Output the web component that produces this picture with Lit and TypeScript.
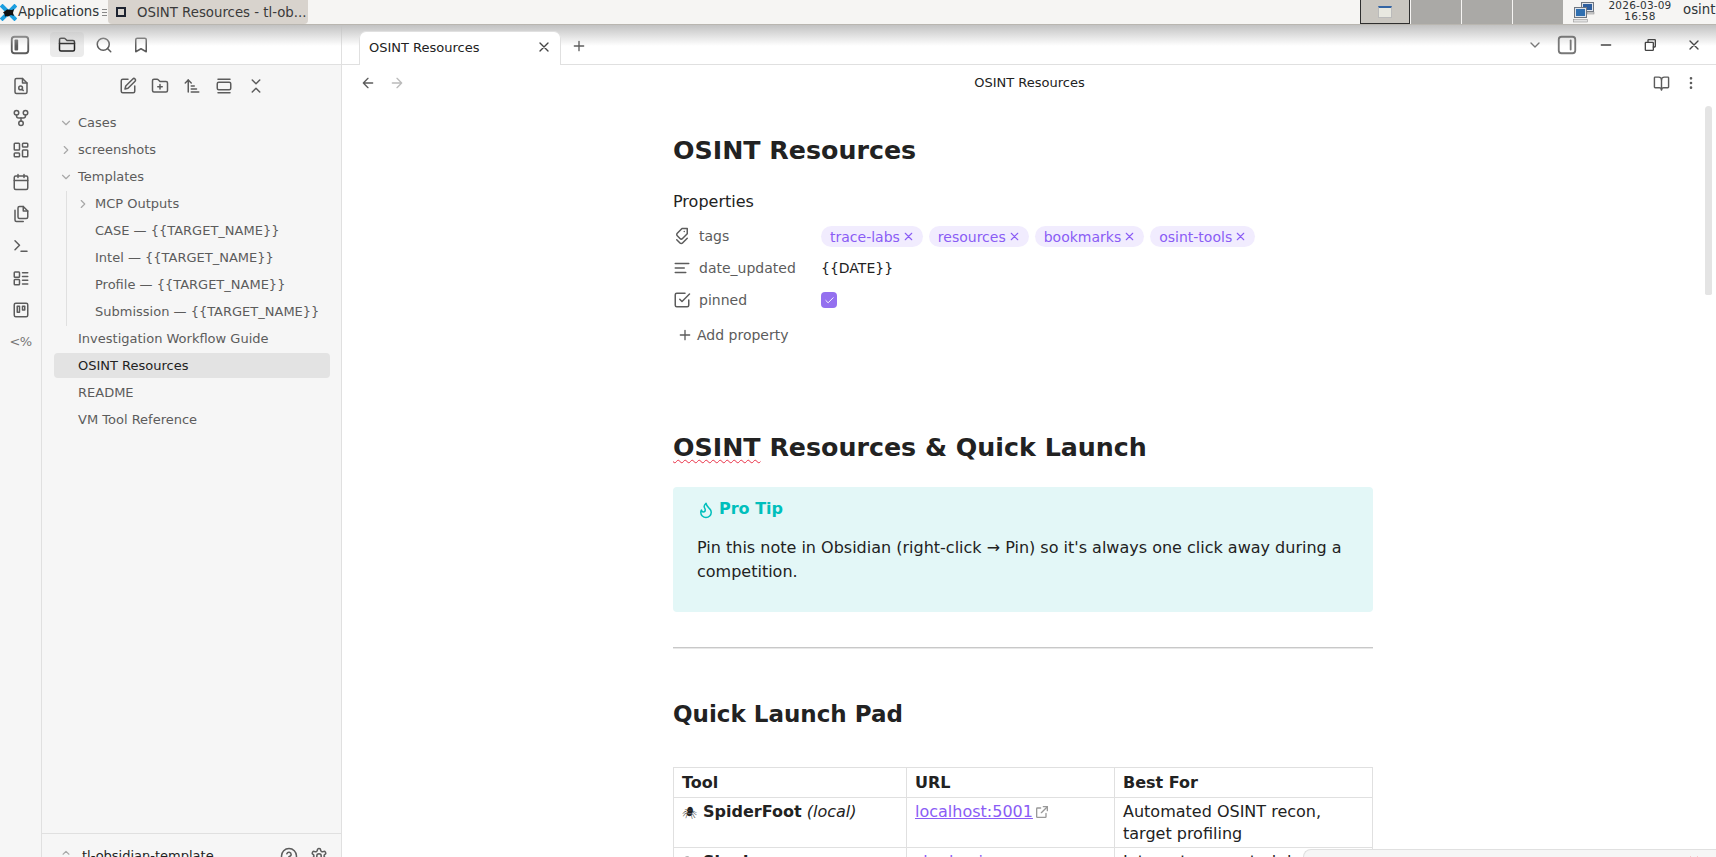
import { LitElement, html, css, svg } from "lit";
import { customElement } from "lit/decorators.js";

const ic = (body: unknown, size = 18, cls = "") => html`<svg class="ic ${cls}" width=${size} height=${size} viewBox="0 0 24 24" fill="none" stroke="currentColor" stroke-width="2" stroke-linecap="round" stroke-linejoin="round">${body}</svg>`;

const icons = {
  sidebarL: svg`<rect x="3" y="3" width="18" height="18" rx="3"/><rect x="6" y="6" width="4" height="12" rx="1" fill="currentColor" stroke="none"/>`,
  sidebarR: svg`<rect x="3" y="3" width="18" height="18" rx="3"/><path d="M16 7v10"/>`,
  folder: svg`<path d="M4 20h16a2 2 0 0 0 2-2V8a2 2 0 0 0-2-2h-8L9.6 3.6A2 2 0 0 0 8 3H4a2 2 0 0 0-2 2v13a2 2 0 0 0 2 2Z"/><path d="M2 10h20"/>`,
  search: svg`<circle cx="11" cy="11" r="8"/><path d="m21 21-4.3-4.3"/>`,
  bookmark: svg`<path d="m19 21-7-4-7 4V5a2 2 0 0 1 2-2h10a2 2 0 0 1 2 2z"/>`,
  fileSearch: svg`<path d="M14 2H6a2 2 0 0 0-2 2v16a2 2 0 0 0 2 2h12a2 2 0 0 0 2-2V8z"/><path d="M14 2v6h6"/><circle cx="11.500" cy="14.500" r="2.500"/><path d="m13.500 16.500 1.500 1.500"/>`,
  graph: svg`<circle cx="6" cy="5" r="3"/><circle cx="18" cy="5" r="3"/><circle cx="12" cy="19" r="3"/><path d="M6 8v1a3 3 0 0 0 3 3h6a3 3 0 0 0 3-3V8"/><path d="M12 12v4"/>`,
  dash: svg`<rect x="3" y="3" width="7" height="9" rx="1"/><rect x="14" y="3" width="7" height="5" rx="1"/><rect x="14" y="12" width="7" height="9" rx="1"/><rect x="3" y="16" width="7" height="5" rx="1"/>`,
  cal: svg`<path d="M8 2v4M16 2v4"/><rect x="3" y="4" width="18" height="18" rx="2"/><path d="M3 10h18"/>`,
  copy: svg`<path d="M15 2H10a2 2 0 0 0-2 2v12a2 2 0 0 0 2 2h9a2 2 0 0 0 2-2V8z"/><path d="M15 2v6h6"/><path d="M4 7v13a2 2 0 0 0 2 2h9"/>`,
  term: svg`<path d="m4 17 6-6-6-6"/><path d="M12 19h8"/>`,
  list: svg`<rect x="3" y="4" width="7" height="7" rx="1"/><rect x="3" y="14" width="7" height="7" rx="1"/><path d="M14 5h7M14 10h7M14 15h7M14 20h7"/>`,
  kanban: svg`<rect x="3" y="3" width="18" height="18" rx="2"/><rect x="7" y="7" width="3" height="8"/><rect x="14" y="7" width="3" height="5"/>`,
  edit: svg`<path d="M12 3H5a2 2 0 0 0-2 2v14a2 2 0 0 0 2 2h14a2 2 0 0 0 2-2v-7"/><path d="M18.400 2.600a2.100 2.100 0 0 1 3 3L12 15l-4 1 1-4Z"/>`,
  folderPlus: svg`<path d="M4 20h16a2 2 0 0 0 2-2V8a2 2 0 0 0-2-2h-8L9.600 3.600A2 2 0 0 0 8 3H4a2 2 0 0 0-2 2v13a2 2 0 0 0 2 2Z"/><path d="M12 10v6M9 13h6"/>`,
  sort: svg`<path d="m3 8 4-4 4 4"/><path d="M7 4v16"/><path d="M11 12h4M11 16h7M11 20h10"/>`,
  frame: svg`<path d="M4 3h16M4 21h16"/><rect x="3" y="7" width="18" height="10" rx="2"/>`,
  collapse: svg`<path d="m7 20 5-5 5 5"/><path d="m7 4 5 5 5-5"/>`,
  chevD: svg`<path d="m6 9 6 6 6-6"/>`,
  chevR: svg`<path d="m9 18 6-6-6-6"/>`,
  chevsUD: svg`<path d="m7 15 5 5 5-5"/><path d="m7 9 5-5 5 5"/>`,
  x: svg`<path d="M18 6 6 18M6 6l12 12"/>`,
  plus: svg`<path d="M5 12h14M12 5v14"/>`,
  left: svg`<path d="M19 12H5M12 19l-7-7 7-7"/>`,
  right: svg`<path d="M5 12h14M12 5l7 7-7 7"/>`,
  book: svg`<path d="M12 7v14"/><path d="M3 18a1 1 0 0 1-1-1V4a1 1 0 0 1 1-1h5a4 4 0 0 1 4 4 4 4 0 0 1 4-4h5a1 1 0 0 1 1 1v13a1 1 0 0 1-1 1h-6a3 3 0 0 0-3 3 3 3 0 0 0-3-3z"/>`,
  dots: svg`<circle cx="12" cy="5" r="1"/><circle cx="12" cy="12" r="1"/><circle cx="12" cy="19" r="1"/>`,
  tags: svg`<g transform="rotate(90 12 12)"><path d="M9 5H2v7l6.290 6.290c.94.94 2.480.94 3.420 0l3.580-3.580c.94-.94.94-2.480 0-3.420L9 5Z"/><path d="M6 9.010V9"/><path d="m15 5 6.300 6.300a2.400 2.400 0 0 1 0 3.400L17 19"/></g>`,
  text: svg`<path d="M21 6H3M15 12H3M17 18H3"/>`,
  check: svg`<path d="m9 11 3 3L22 4"/><path d="M21 12v7a2 2 0 0 1-2 2H5a2 2 0 0 1-2-2V5a2 2 0 0 1 2-2h11"/>`,
  tick: svg`<path d="M20 6 9 17l-5-5"/>`,
  minus: svg`<path d="M5 12h14"/>`,
  restore: svg`<rect x="5" y="8" width="12" height="12" rx="1"/><path d="M9 8V5a1 1 0 0 1 1-1h9a1 1 0 0 1 1 1v9a1 1 0 0 1-1 1h-2"/>`,
  flame: svg`<path d="M8.500 14.500A2.500 2.500 0 0 0 11 12c0-1.400-.5-2-1-3-1.100-2.100-.2-4 2-6 .5 2.500 2 4.900 4 6.500 2 1.600 3 3.500 3 5.500a7 7 0 1 1-14 0c0-1.200.4-2.300 1-3a2.500 2.500 0 0 0 2.500 2.500z"/>`,
  help: svg`<circle cx="12" cy="12" r="10"/><path d="M9.100 9a3 3 0 0 1 5.800 1c0 2-3 3-3 3"/><path d="M12 17h.01"/>`,
  gear: svg`<path d="M12.200 2h-.4a2 2 0 0 0-2 2v.2a2 2 0 0 1-1 1.700l-.4.300a2 2 0 0 1-2 0l-.2-.1a2 2 0 0 0-2.700.700l-.2.400a2 2 0 0 0 .7 2.700l.2.100a2 2 0 0 1 1 1.700v.5a2 2 0 0 1-1 1.700l-.2.100a2 2 0 0 0-.7 2.700l.2.400a2 2 0 0 0 2.700.7l.2-.1a2 2 0 0 1 2 0l.4.300a2 2 0 0 1 1 1.700v.2a2 2 0 0 0 2 2h.4a2 2 0 0 0 2-2v-.2a2 2 0 0 1 1-1.700l.4-.3a2 2 0 0 1 2 0l.2.100a2 2 0 0 0 2.700-.7l.2-.4a2 2 0 0 0-.7-2.700l-.2-.1a2 2 0 0 1-1-1.700v-.5a2 2 0 0 1 1-1.700l.2-.1a2 2 0 0 0 .7-2.700l-.2-.4a2 2 0 0 0-2.700-.7l-.2.100a2 2 0 0 1-2 0l-.4-.3a2 2 0 0 1-1-1.700V4a2 2 0 0 0-2-2z"/><circle cx="12" cy="12" r="3"/>`,
  ext: svg`<path d="M14 4h6v6"/><path d="M20 4 11 13"/><path d="M18 14v5a1 1 0 0 1-1 1H5a1 1 0 0 1-1-1V7a1 1 0 0 1 1-1h5"/>`,
};

@customElement("app-root")
export class AppRoot extends LitElement {
  static styles = css`
    :host { display: block; width: 1716px; height: 857px; overflow: hidden; position: relative; background: #fff; font-family: "DejaVu Sans", sans-serif; color: #222; }
    .ic { display: block; flex: none; }
    .taskbar { height: 24px; background: #f6f5f3; border-bottom: 1px solid #b9b6b0; box-sizing: content-box; display: flex; align-items: stretch; font-size: 13.300px; color: #2e3436; position: relative; z-index: 3; white-space: nowrap; }
    .app-logo { width: 17px; margin-right: 1px; display: flex; align-items: center; }
    .apps { display: flex; align-items: center; line-height: 20px; width: 84px; }
    .sep { width: 5px; display: flex; flex-direction: column; justify-content: center; gap: 2px; margin-right: 1px; }
    .sep i { display: block; height: 1px; background: #888; }
    .win { width: 200px; height: 24px; background: #d8d3cd; border-radius: 0 0 4px 4px; display: flex; align-items: center; gap: 11px; padding-left: 7px; box-sizing: border-box; color: #3a3a3a; }
    .win-dot { width: 6px; height: 6px; border: 2px solid #1d2330; background: #d8d3cd; margin-left: 1px; flex: none; }
    .spacer { flex: 1; }
    .ws { width: 50px; height: 24px; background: #c9c6c0; border: 1px solid #2e2e2e; border-top: none; box-sizing: border-box; display: flex; align-items: center; justify-content: center; }
    .ws-i { width: 14px; height: 12px; border-top: 2px solid #3465a4; background: #e8e8e0; border-left: 1px solid #bbb; border-right: 1px solid #bbb; border-bottom: 1px solid #bbb; box-sizing: border-box; }
    .ws2 { width: 51px; height: 24px; background: #aaa9a6; border-left: 1px solid #f6f5f3; box-sizing: border-box; }
    .net { width: 22px; margin: 0 13px 0 10px; display: flex; align-items: center; }
    .clock { font-size: 10.500px; line-height: 11px; text-align: center; width: 64px; color: #2e3436; letter-spacing: .2px; }
    .user { font-size: 13.300px; margin-left: 11px; line-height: 20px; width: 33px; }

    .app { height: 832px; display: flex; position: relative; }
    .shade { position: absolute; left: 0; right: 0; top: 0; height: 21px; background: linear-gradient(#c2c2c2, rgba(255,255,255,0)); z-index: 2; pointer-events: none; }
    .left { width: 342px; flex: none; display: flex; flex-direction: column; border-right: 1px solid #e0e0e0; box-sizing: border-box; background: #f6f6f6; color: #5c5c5c; }
    .left-top { height: 39px; flex: none; background: #fff; border-bottom: 1px solid #e0e0e0; box-sizing: content-box; display: flex; align-items: center; padding-left: 9px; }
    .left-top .sb { margin-right: 19px; }
    .tabbtn { width: 34px; height: 25px; border-radius: 4px; display: flex; align-items: center; justify-content: center; margin-right: 3px; color: #5c5c5c; }
    .tabbtn.on { background: #ebebeb; color: #222; }
    .left-body { flex: 1; display: flex; min-height: 0; }
    .ribbon { width: 42px; flex: none; border-right: 1px solid #e0e0e0; box-sizing: border-box; display: flex; flex-direction: column; align-items: center; padding-top: 12px; gap: 14px; }
    .rib-txt { font-size: 13px; line-height: 18px; letter-spacing: -.5px; color: #777; }
    .nav { flex: 1; display: flex; flex-direction: column; min-width: 0; }
    .nav-btns { height: 42px; display: flex; align-items: center; justify-content: center; gap: 14px; padding-left: 1px; box-sizing: border-box; flex: none; }
    .tree { flex: 1; padding: 3px 11px 0 12px; font-size: 13px; }
    .row { height: 25px; margin-bottom: 2px; display: flex; align-items: center; border-radius: 4px; padding-left: 5px; white-space: nowrap; }
    .row.on { background: #e3e3e3; color: #222; }
    .row .tw { width: 14px; margin-right: 5px; color: #a8a8a8; display: flex; }
    .row .nt { width: 19px; }
    .indent { margin-left: 12px; border-left: 1px solid #e0e0e0; padding-left: 4px; height: 135px; }
    .indent .row { padding-left: 0; }
    .indent .row .tw, .indent .row .nt { margin-left: 5px; }
    .vault { height: 24px; overflow: hidden; border-top: 1px solid #e0e0e0; display: flex; align-items: flex-start; padding: 13px 0 0 17px; color: #333; flex: none; box-sizing: border-box; }
    .vault .chev { color: #a8a8a8; margin-right: 9px; margin-top: 2px; }
    .vault .name { flex: 1; line-height: 18px; color: #222; font-size: 13px; }
    .vault .b { color: #5c5c5c; margin-left: 12px; }
    .vault .b + .b { margin-right: 13px; }

    .main { flex: 1; min-width: 0; display: flex; flex-direction: column; position: relative; }
    .tabs { height: 39px; border-bottom: 1px solid #e0e0e0; background: #fff; display: flex; align-items: flex-end; padding-left: 17px; position: relative; box-sizing: content-box; flex: none; }
    .tab { width: 202px; height: 34px; margin-bottom: -1px; background: #fff; border: 1px solid #e0e0e0; border-bottom: none; border-radius: 7px 7px 0 0; box-sizing: border-box; display: flex; align-items: center; padding: 0 8px 3px 9px; font-size: 13px; position: relative; z-index: 3; }
    .tab span { flex: 1; }
    .tab .ic { color: #444; }
    .addtab { margin: 0 0 10px 10px; color: #5c5c5c; z-index: 3; }
    .tab-r { position: absolute; right: 14px; top: 0; height: 39px; display: flex; align-items: center; color: #444; z-index: 3; }
    .tab-r .caret { color: #777; margin-right: 13px; }
    .tab-r .sbr { color: #777; margin-right: 20px; }
    .tab-r .wb { margin-right: 28px; }
    .tab-r .wb:last-child { margin-right: 0; }
    .view-head { height: 36px; display: flex; align-items: center; padding: 0 17px 0 18px; flex: none; color: #5c5c5c; }
    .view-head .fwd { color: #bbb; margin-left: 13px; }
    .view-title { flex: 1; text-align: center; font-size: 13px; color: #222; padding: 0 0 2px 1px; }
    .view-head .acts { display: flex; gap: 13px; }
    .scrollbar { position: absolute; right: 4px; top: 81px; width: 7px; height: 189px; background: #e4e4e4; border-radius: 4px 4px 2px 2px; }

    .doc { width: 700px; margin-left: 331px; padding-top: 32px; font-size: 16px; line-height: 24px; }
    h1 { margin: 0; font-size: 25.300px; line-height: 36px; font-weight: 700; color: #222; }
    .ptitle { font-size: 16px; line-height: 22px; margin-top: 22px; color: #222; }
    .props { margin-top: 7px; font-size: 14px; }
    .prop { display: flex; align-items: center; height: 32px; }
    .pk { width: 148px; display: flex; align-items: center; color: #5c5c5c; gap: 8px; }
    .pk .ic { width: 18px; }
    .pv { font-size: 14px; }
    .pills { display: flex; gap: 6px; font-size: 14px; }
    .pill { background: #f1ecfe; color: #8a5cf5; height: 21px; border-radius: 11px; padding: 0 8px 0 9px; display: flex; align-items: center; gap: 2px; margin-top: 1px; }
    .cb { width: 16px; height: 16px; border-radius: 4px; background: #9470ef; display: flex; align-items: center; justify-content: center; color: #fff; }
    .add { display: flex; align-items: center; height: 28px; margin-top: 5px; color: #5c5c5c; gap: 4px; padding-left: 4px; font-size: 14px; }
    h2.big { margin: 81px 0 0; font-size: 25.300px; line-height: 36px; font-weight: 700; }
    .sq { text-decoration: underline wavy #e93147 1px; text-underline-offset: 3px; text-decoration-skip-ink: none; }
    .callout { margin-top: 21px; background: #e3f7f7; border-radius: 4px; padding: 10px 24px 18px; height: 125px; box-sizing: border-box; }
    .c-head { display: flex; align-items: center; color: #00bfbc; font-weight: 700; gap: 4px; height: 24px; }
    .c-head .ic { margin-top: 2px; }
    .callout p { margin: 15px 0 0; line-height: 24px; }
    hr { border: 0; border-top: 1px solid #c8c8c8; border-bottom: 1px solid #e8e8e8; margin: 35px 0 0; height: 0; }
    h2.sec { margin: 47px 0 0; font-size: 23px; line-height: 36px; font-weight: 700; }
    table { border-collapse: collapse; width: 700px; margin-top: 35px; table-layout: fixed; line-height: 22px; font-size: 16px; }
    td, th { border: 1px solid #e0e0e0; padding: 2.500px 8px; text-align: left; vertical-align: top; }
    th { font-weight: 700; padding: 3.500px 8px; }
    a { color: #8a5cf5; }
    .ex { display: inline-block; vertical-align: -3px; color: #999; margin-left: 1px; }
    .c1 { width: 233px; } .c2 { width: 208px; }
    .em { font-family: "Noto Sans CJK SC", "DejaVu Sans", sans-serif; font-size: 12px; margin-right: 1px; }

    .status { position: absolute; right: 0; bottom: 0; width: 413px; height: 8px; background: #f6f6f6; border: 1px solid #e0e0e0; border-right: none; border-bottom: none; border-radius: 8px 0 0 0; box-sizing: border-box; z-index: 4; overflow: hidden; display: flex; justify-content: flex-end; padding: 4px 16px 0 0; }
    .status svg { color: #f0566a; }
  `;

  render() {
    const rowf = (n: string, on = false) => html`<div class="row ${on ? "on" : ""}"><div class="nt"></div>${n}</div>`;
    const rowd = (n: string, open: boolean) => html`<div class="row"><div class="tw">${ic(open ? icons.chevD : icons.chevR, 14)}</div>${n}</div>`;
    const pill = (t: string) => html`<div class="pill">${t}${ic(icons.x, 13)}</div>`;
    return html`
      <div class="taskbar">
        <div class="app-logo"><svg width="17" height="17" viewBox="0 0 17 17"><path d="M2.500 2.500 14.500 14.500M14.500 2.500 2.500 14.500" stroke="#1d9fe0" stroke-width="4" stroke-linecap="square"/><path d="M3 8.500 7 5.500l5 .5 2-1-1 4 1 3-3-1-3 1.500-2-.5-1 1-.5-3z" fill="#111"/></svg></div>
        <div class="apps">Applications</div>
        <div class="sep"><i></i><i></i><i></i></div>
        <div class="win"><div class="win-dot"></div>OSINT Resources - tl-ob...</div>
        <div class="spacer"></div>
        <div class="ws"><div class="ws-i"></div></div>
        <div class="ws2"></div><div class="ws2"></div><div class="ws2"></div>
        <div class="net"><svg width="22" height="22" viewBox="0 0 22 22"><rect x="8.500" y="1.500" width="12" height="9" fill="#dfe3ea" stroke="#6f7680"/><rect x="10" y="3" width="9" height="6" fill="#2f5f9e"/><rect x="14" y="11" width="7" height="2" fill="#d5d5d5" stroke="#888" stroke-width=".5"/><rect x="1.500" y="6.500" width="12" height="10" fill="#dfe3ea" stroke="#6f7680"/><rect x="3" y="8" width="9" height="7" fill="#2f6fb0"/><rect x="0.500" y="18.500" width="14" height="2.500" fill="#e2e2e2" stroke="#888" stroke-width=".5"/></svg></div>
        <div class="clock">2026-03-09<br>16:58</div>
        <div class="user">osint</div>
      </div>
      <div class="app">
        <div class="left">
          <div class="left-top">
            <div class="sb">${ic(icons.sidebarL, 22)}</div>
            <div class="tabbtn on">${ic(icons.folder, 18)}</div>
            <div class="tabbtn">${ic(icons.search, 18)}</div>
            <div class="tabbtn">${ic(icons.bookmark, 18)}</div>
          </div>
          <div class="left-body">
            <div class="ribbon">
              ${[icons.fileSearch, icons.graph, icons.dash, icons.cal, icons.copy, icons.term, icons.list, icons.kanban].map((i) => ic(i, 18))}
              <div class="rib-txt">&lt;%</div>
            </div>
            <div class="nav">
              <div class="nav-btns">${[icons.edit, icons.folderPlus, icons.sort, icons.frame, icons.collapse].map((i) => ic(i, 18))}</div>
              <div class="tree">
                ${rowd("Cases", true)}
                ${rowd("screenshots", false)}
                ${rowd("Templates", true)}
                <div class="indent">
                  ${rowd("MCP Outputs", false)}
                  ${rowf("CASE — {{TARGET_NAME}}")}
                  ${rowf("Intel — {{TARGET_NAME}}")}
                  ${rowf("Profile — {{TARGET_NAME}}")}
                  ${rowf("Submission — {{TARGET_NAME}}")}
                </div>
                ${rowf("Investigation Workflow Guide")}
                ${rowf("OSINT Resources", true)}
                ${rowf("README")}
                ${rowf("VM Tool Reference")}
              </div>
              <div class="vault">
                <div class="chev">${ic(icons.chevsUD, 14)}</div>
                <div class="name">tl-obsidian-template</div>
                <div class="b">${ic(icons.help, 18)}</div>
                <div class="b">${ic(icons.gear, 18)}</div>
              </div>
            </div>
          </div>
        </div>
        <div class="main">
          <div class="tabs">
            <div class="tab"><span>OSINT Resources</span>${ic(icons.x, 16)}</div>
            <div class="addtab">${ic(icons.plus, 16)}</div>
            <div class="tab-r">
              <div class="caret">${ic(icons.chevD, 16)}</div>
              <div class="sbr">${ic(icons.sidebarR, 22)}</div>
              <div class="wb">${ic(icons.minus, 16)}</div>
              <div class="wb">${ic(icons.restore, 16)}</div>
              <div class="wb">${ic(icons.x, 16)}</div>
            </div>
          </div>
          <div class="view-head">
            ${ic(icons.left, 16)}
            <div class="fwd">${ic(icons.right, 16)}</div>
            <div class="view-title">OSINT Resources</div>
            <div class="acts">${ic(icons.book, 17)}${ic(icons.dots, 16)}</div>
          </div>
          <div class="doc">
            <h1>OSINT Resources</h1>
            <div class="ptitle">Properties</div>
            <div class="props">
              <div class="prop"><div class="pk">${ic(icons.tags, 18)}tags</div><div class="pills">${pill("trace-labs")}${pill("resources")}${pill("bookmarks")}${pill("osint-tools")}</div></div>
              <div class="prop"><div class="pk">${ic(icons.text, 18)}date_updated</div><div class="pv">{{DATE}}</div></div>
              <div class="prop"><div class="pk">${ic(icons.check, 18)}pinned</div><div class="cb">${ic(icons.tick, 11)}</div></div>
              <div class="add">${ic(icons.plus, 16)}Add property</div>
            </div>
            <h2 class="big"><span class="sq">OSINT</span> Resources &amp; Quick Launch</h2>
            <div class="callout">
              <div class="c-head">${ic(icons.flame, 18)}Pro Tip</div>
              <p>Pin this note in Obsidian (right-click → Pin) so it's always one click away during a competition.</p>
            </div>
            <hr />
            <h2 class="sec">Quick Launch Pad</h2>
            <table>
              <colgroup><col class="c1" /><col class="c2" /><col /></colgroup>
              <tr><th>Tool</th><th>URL</th><th>Best For</th></tr>
              <tr>
                <td><span class="em">🕷</span> <b>SpiderFoot</b> <i>(local)</i></td>
                <td><a href="#">localhost:5001</a><span class="ex">${ic(icons.ext, 16)}</span></td>
                <td>Automated OSINT recon, target profiling</td>
              </tr>
              <tr>
                <td><span class="em">🔍</span> <b>Shodan</b></td>
                <td><a href="#">shodan.io</a></td>
                <td>Internet-connected device search</td>
              </tr>
            </table>
          </div>
          <div class="scrollbar"></div>
        </div>
        <div class="shade"></div>
      </div>
      <div class="status">${ic(icons.x, 12)}</div>
    `;
  }
}
